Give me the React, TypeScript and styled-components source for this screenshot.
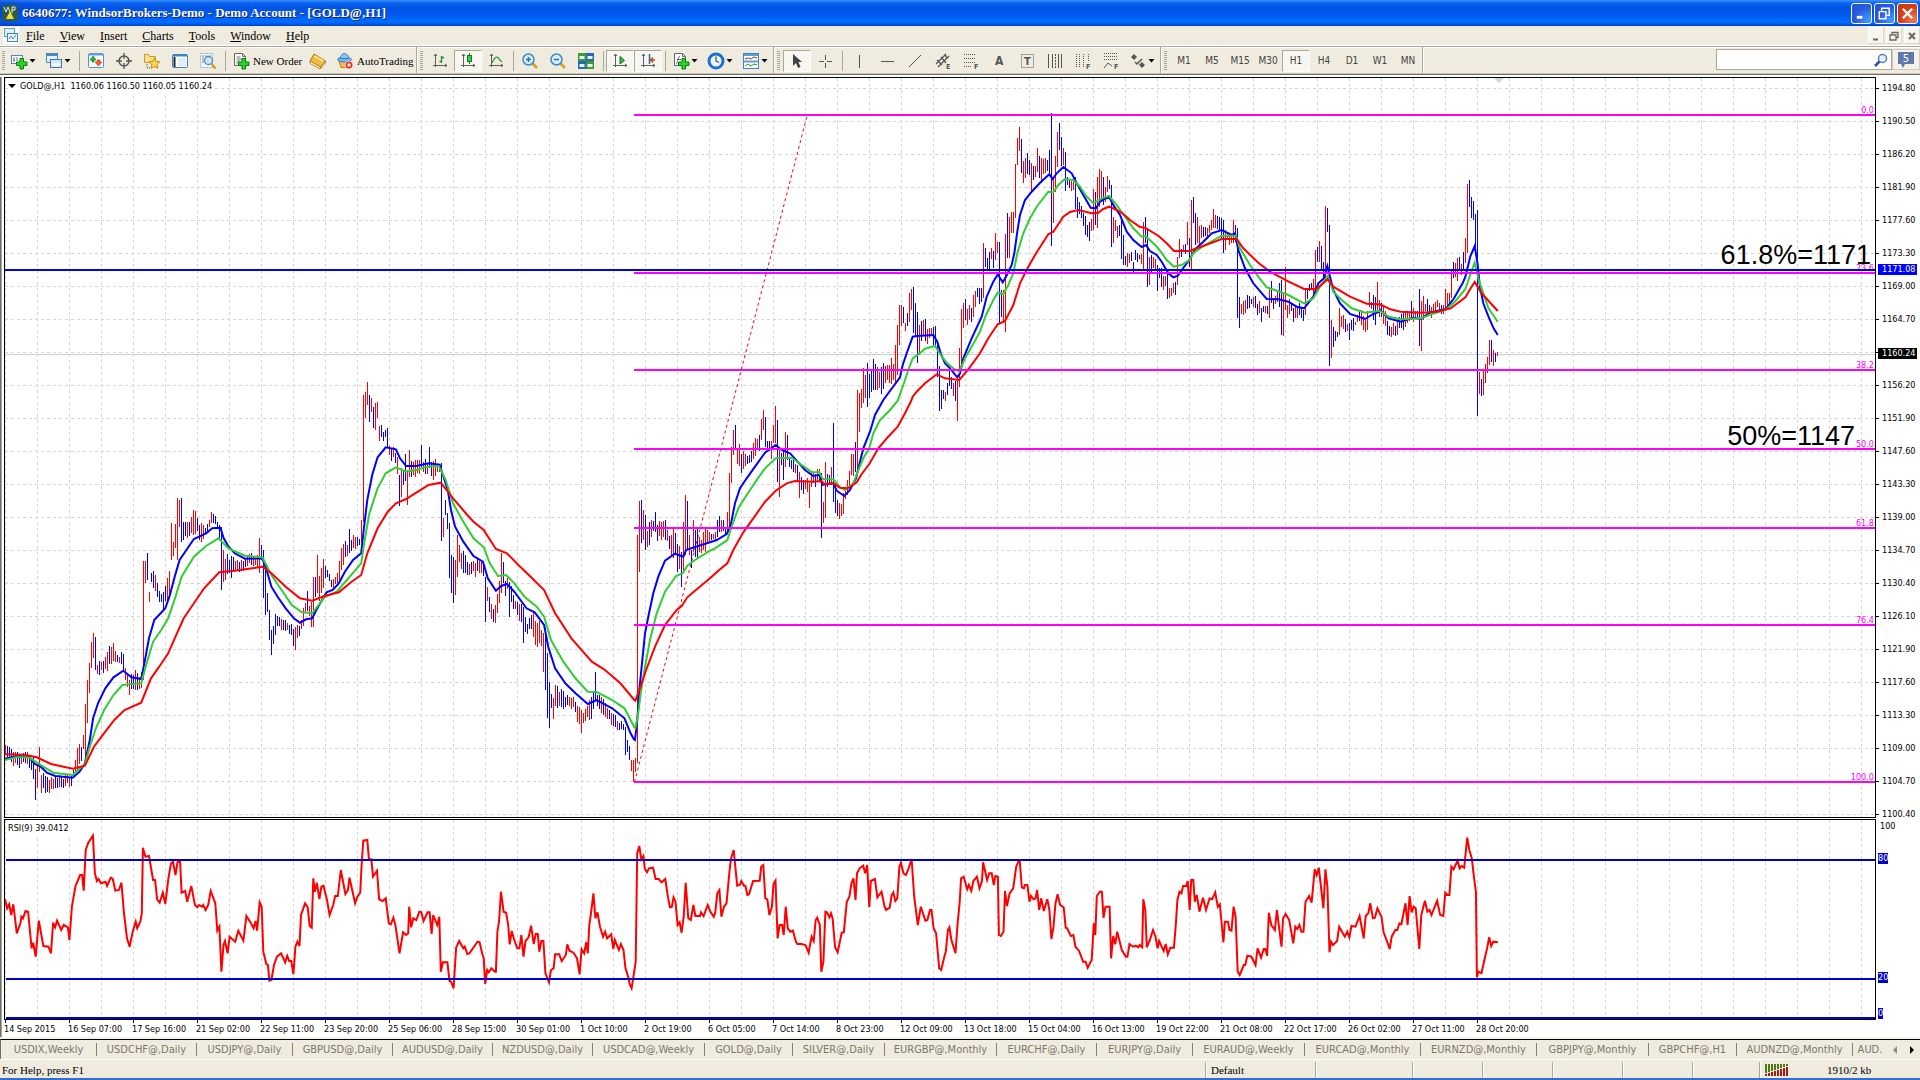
import React from "react";
import styled, { createGlobalStyle, css } from "styled-components";

const BEIGE = "#efebde";
const TAHOMA = '"DejaVu Sans Condensed", "Noto Sans", sans-serif';
const SERIF = '"Liberation Serif", serif';

const GlobalStyle = createGlobalStyle`
  * { box-sizing: border-box; }
  body { margin: 0; background: ${BEIGE}; }
  button, input { font: inherit; color: inherit; margin: 0; padding: 0; border: 0; background: none; }
  button { cursor: default; }
  button svg { overflow: visible; }
`;

/* ---------- series data ---------- */

type Block = { ox: number; oy: number; kx: number; ky: number; d: string };

const A = { ox: 0, oy: 360, kx: 2.45, ky: 3 };
const B = { ox: 600, oy: 400, kx: 3, ky: 3 };
const C = { ox: 900, oy: 90, kx: 3, ky: 3 };
const D = { ox: 1380, oy: 90, kx: 2.904, ky: 3 };

const fast: Block[] = [
  { ...A, d: "12,1196 40,1189 70,1190 85,1212 100,1220 115,1238 135,1248 178,1253 195,1235 208,1210 220,1140 228,1075 240,1030 258,985 278,952 302,932 312,942 322,952 346,957 352,920 365,835 378,780 405,745 415,710 428,650 440,600 455,573 475,537 505,520 520,505 540,503 548,535 560,560 575,580 600,596 643,595 652,625 665,680 680,710 700,745 720,775 735,788 750,778 765,775 775,750 800,697 815,690 830,670 845,635 865,600 885,580 890,520 900,420 912,345 925,292 945,262 970,268 980,295 995,318 1020,318 1050,310 1077,314 1085,345 1097,390 1105,450 1115,500 1135,545 1160,588 1183,605 1195,655 1215,692 1228,678 1242,672 1260,695 1290,745 1310,757 1333,795 1343,860 1360,925 1385,970 1410,1000 1440,1032 1462,1020 1500,1045 1530,1075 1545,1120 1553,1138" },
  { ...B, d: "105,1020 112,960 118,870 126,790 135,700 147,640 160,580 175,530 195,482 225,461 250,470 258,450 285,441 330,427 350,420 380,402 392,375 405,310 420,265 440,235 465,200 495,158 527,135 545,150 570,160 590,182 615,210 640,228 658,225 667,255 700,250 710,272 733,288 750,270 768,235 780,185 790,145 810,95 825,45 850,0" },
  { ...C, d: "0,862 8,825 20,790 38,740 50,738 100,735 112,755 122,790 135,820 150,835 172,862 180,850 190,805 215,745 245,680 260,620 280,575 293,553 308,577 318,560 335,525 343,490 352,425 360,375 375,330 395,305 420,278 448,253 458,267 470,250 490,231 515,250 530,280 550,315 572,353 588,355 600,335 627,320 640,345 660,375 680,425 700,450 725,471 738,465 750,483 770,495 785,515 805,550 820,562 833,558 845,540 868,510 885,478 910,455 935,430 965,420 995,435 1005,430 1015,480 1035,535 1060,580 1100,627 1135,628 1165,635 1190,650 1212,655 1240,620 1255,580 1272,565 1282,528 1290,560 1300,600 1320,640 1350,672 1395,687 1420,672 1436,666" },
  { ...D, d: "0,660 25,685 60,695 95,683 120,687 140,670 165,663 190,658 215,625 240,580 248,560 262,500 275,468 283,520 290,590 300,640 315,680 330,715 342,735" },
];

const middle: Block[] = [
  { ...A, d: "12,1200 40,1192 70,1192 100,1215 130,1238 178,1245 208,1212 220,1160 235,1105 255,1050 278,1005 300,975 346,970 358,915 375,845 395,810 412,775 430,710 445,650 475,590 505,558 535,535 560,565 600,587 643,592 665,645 690,690 715,735 740,757 765,760 795,712 825,695 850,660 885,610 892,550 905,460 925,385 945,340 970,322 995,335 1020,330 1045,320 1075,318 1092,360 1110,430 1130,475 1160,535 1185,562 1200,610 1220,648 1240,645 1260,670 1285,710 1315,740 1333,770 1350,840 1380,905 1410,955 1440,995 1462,996 1500,1020 1530,1045 1545,1080 1554,1102" },
  { ...B, d: "106,985 114,945 122,880 135,800 150,720 170,640 195,575 228,528 248,520 262,497 285,480 330,452 345,445 382,420 395,380 415,325 440,285 470,240 495,205 527,175 575,173 605,195 635,216 658,217 668,237 700,238 720,262 735,270 760,250 775,210 790,175 808,145 820,100 840,60 870,30 893,2" },
  { ...C, d: "10,885 25,840 38,805 60,790 75,776 105,768 122,795 140,818 160,835 178,845 195,805 215,770 240,725 258,675 280,630 293,608 310,612 325,585 340,550 352,490 370,430 390,385 410,350 445,305 460,307 475,285 495,267 520,270 540,290 560,320 580,340 605,325 627,318 650,345 675,380 700,415 725,440 735,438 755,455 775,475 800,510 822,530 845,525 868,510 880,490 915,465 965,437 1008,437 1020,475 1050,525 1075,560 1100,592 1140,605 1165,615 1212,640 1240,625 1260,590 1283,558 1300,605 1325,630 1355,655 1395,668 1436,663" },
  { ...D, d: "0,663 25,680 60,688 120,685 150,672 190,660 220,632 248,597 262,555 275,518 288,575 300,610 315,655 342,695" },
];

const slow: Block[] = [
  { ...A, d: "12,1183 60,1184 90,1192 125,1212 178,1226 208,1217 230,1160 258,1115 280,1080 305,1050 346,1028 370,955 390,920 412,880 430,830 450,775 475,730 500,685 537,637 575,632 600,628 643,620 665,640 700,680 735,715 765,722 795,708 830,697 860,667 885,645 900,580 925,505 950,455 970,430 995,417 1020,398 1050,375 1080,368 1110,415 1145,465 1160,485 1185,510 1215,567 1242,580 1270,615 1300,650 1333,690 1360,760 1400,835 1450,905 1480,928 1520,970 1554,1020" },
  { ...B, d: "106,902 120,865 140,805 165,740 195,675 230,630 245,618 262,592 285,572 330,535 355,512 382,490 400,450 430,397 460,355 495,305 527,272 560,250 585,243 640,245 665,243 672,252 700,250 720,263 745,265 770,247 785,222 808,192 835,145 865,110 893,80 915,40 933,4" },
  { ...C, d: "38,920 50,905 75,880 110,853 135,865 178,870 205,838 240,790 265,745 293,703 315,693 340,645 360,580 385,530 410,487 445,433 460,425 490,380 510,366 535,360 575,370 595,368 610,357 627,350 650,360 670,372 690,390 720,411 735,413 775,437 800,460 822,483 868,483 895,473 965,447 1010,447 1030,475 1075,518 1110,545 1160,572 1212,597 1250,597 1283,568 1300,590 1350,620 1400,641 1436,643" },
  { ...D, d: "0,643 30,658 60,665 120,668 165,665 205,655 248,622 262,597 275,576 295,610 342,663" },
];

/* High/low ranges of the hourly bars. A leading r or b pins one single bar and its colour. */
const ranges: Block[] = [
  { ...A, d: "12,1160,1190 30,1165,1215 50,1175,1220 65,1175,1205 80,1195,1250 b87,1227,1320 92,1215,1290 r97,1160,1235 105,1240,1290 120,1260,1300 135,1245,1285 155,1250,1280 175,1245,1275 185,1180,1240 200,1150,1200 r209,1032,1210 r214,960,1090 r219,910,1000 r224,845,925 r229,820,895 b234,830,930 240,900,935 245,905,940 260,885,930 273,850,915 290,885,915 300,875,920 308,925,975 315,955,1005 327,935,1000 345,940,985 r351,603,960 r357,603,670 b362,580,660 370,632,665 380,650,700 390,700,735 400,680,740 412,660,720 r420,490,600 428,500,560 r435,415,600 r440,420,500 b445,415,545 450,490,540 455,485,530 465,490,540 472,458,520 480,460,510 490,490,540 505,500,525 517,458,490 527,465,495 538,500,540 b543,500,690 r548,570,665 550,575,660 560,590,655 575,600,640 595,600,630 610,575,605 630,590,625 r636,535,640 b641,555,600 b646,570,715 b651,620,765 b656,700,755 b661,750,840 b666,810,885 670,790,865 676,755,800 690,775,805 710,790,820 720,800,860 r725,800,870 735,785,830 745,720,780 752,700,750 760,740,800 r768,650,800 b773,650,710 r778,585,700 790,605,680 800,625,650 812,655,690 825,640,670 832,600,650 838,540,610 850,560,595 b857,507,580 868,525,570 880,540,560 r885,480,550 r890,105,485 r895,95,175 r900,66,135 b905,105,185 r910,115,155 b916,140,205 r921,130,210 r925,125,175 930,190,235 940,215,245 945,195,235 b950,205,260 955,260,305 965,265,295 975,285,345 b979,345,437 r984,325,410 b990,330,375 r998,330,435 r1003,270,350 1010,290,360 1025,300,345 b1033,255,320 1045,300,345 b1052,262,325 1062,300,355 1075,310,330 b1081,310,543 r1088,475,530 1098,480,525 b1101,490,655 b1106,585,700 b1111,590,728 r1116,600,705 r1121,525,650 1130,570,625 1145,600,655 1160,600,645 1172,595,640 1185,610,655 b1190,650,785 1200,715,775 1210,745,810 1220,680,750 r1228,580,700 b1233,605,670 1243,640,690 b1248,665,770 1258,710,745 1270,735,780 1280,730,790 b1283,740,848 1290,790,835 1300,760,805 1312,770,850 1325,800,865 r1331,820,935 b1336,805,990 b1341,880,1075 b1346,965,1105 1352,1005,1075 1362,980,1050 1375,995,1045 1390,1010,1045 1405,1005,1040 1420,1050,1110 r1425,1050,1120 1435,1045,1080 1448,1010,1070 b1459,935,1020 1465,990,1040 1480,1030,1065 1500,1055,1095 1515,1080,1115 1528,1090,1110 b1533,1100,1185 1540,1150,1200 1547,1200,1245" },
  { ...B, d: "r100,1080,1145 r106,1075,1115 r112,405,1090 r118,303,515 b124,300,428 r130,330,420 b136,345,450 142,380,435 150,375,440 158,360,400 b166,335,395 172,365,415 190,365,410 200,375,430 210,420,460 220,390,470 232,430,510 b244,455,560 r250,365,515 r256,285,465 b262,303,450 270,405,460 b274,450,505 280,370,450 292,400,470 305,410,450 316,385,445 330,395,425 345,395,420 356,340,405 364,350,400 375,375,410 r382,335,400 r388,220,380 r394,140,250 r400,90,165 b406,75,150 412,130,185 424,160,225 436,160,190 445,165,195 458,130,180 470,115,150 480,110,145 r484,58,120 r490,30,90 b496,50,140 506,110,160 514,120,170 r520,75,130 r526,18,130 b532,60,245 r538,150,290 545,160,200 b550,150,240 r556,95,200 b562,105,180 570,175,205 585,185,215 r598,215,293 605,230,280 616,235,265 622,240,285 r628,250,323 636,210,260 650,215,255 658,210,245 b664,220,413 r670,305,370 r676,185,353 685,220,265 694,205,250 b700,70,305 b706,250,340 714,315,360 722,305,350 730,280,335 736,250,300 745,215,260 755,150,230 762,140,205 b767,125,215 r772,-30,220 r778,-20,95 786,-80,20 797,-90,0 804,-100,10 812,-110,0" },
  { ox: 0, oy: 0, kx: 1, ky: 1, d: "874,358,392 880,368,392 886,362,385 892,362,382 895,350,382 r897,325,375 r899,305,345" },
  { ...C, d: "r4,645,708 b10,650,700 16,690,715 22,660,705 r28,610,695 r34,597,660 b40,590,728 b46,640,735 b52,665,818 r58,705,795 64,700,750 72,685,755 80,720,780 90,705,735 102,710,765 107,710,780 b112,765,860 b118,828,962 b124,900,958 130,915,940 138,890,930 144,860,910 149,835,885 155,865,915 163,880,945 r172,870,992 r178,775,890 r184,657,835 r190,640,715 b196,628,690 205,640,690 213,650,690 r220,615,680 230,590,625 240,600,640 245,600,650 r250,460,625 b256,475,530 265,475,535 275,470,515 280,470,530 r286,428,510 r292,455,490 b298,457,700 b304,600,680 r310,600,700 r316,433,725 b322,370,505 r328,380,505 r334,365,430 r341,365,430 r346,222,385 r352,145,225 r358,112,182 b364,148,250 r370,213,278 378,195,260 385,195,250 r394,218,305 400,220,275 407,225,255 r412,175,245 b418,197,265 r424,205,278 432,205,250 442,200,245 b448,180,250 b454,70,467 r460,262,398 r466,198,305 r472,125,230 b478,100,180 b484,140,228 r490,175,225 b496,187,302 502,265,285 510,270,305 520,265,300 b526,260,358 b532,320,385 538,335,370 545,360,400 555,375,425 562,395,445 570,395,445 575,380,430 r580,298,420 b586,305,405 r592,260,415 r598,238,350 r604,243,330 b610,262,345 616,290,330 r622,257,305 b628,270,297 b634,285,470 r640,380,460 648,400,440 655,390,440 660,400,450 b664,385,508 b670,435,525 676,495,540 685,490,525 694,480,515 b700,515,552 708,485,515 718,490,515 726,485,540 r731,397,540 b736,382,460 b742,415,590 r748,500,585 754,490,545 765,500,545 b772,525,602 780,535,580 790,555,595 797,545,590 b802,550,628 808,595,632 815,590,610 826,565,610 r832,500,585 r838,448,505 844,470,495 852,455,490 r862,397,465 b868,445,530 r874,330,540 b880,320,400 b886,370,465 r892,380,460 900,405,455 910,400,440 920,405,445 930,395,430 r940,358,415 948,375,415 958,370,415 b964,385,450 b970,390,490 r976,420,480 985,430,460 995,435,470 r1002,390,460 b1008,405,455 b1012,415,685 b1018,620,715 1024,640,680 1034,640,670 1042,615,655 1050,625,645 1060,620,650 1070,630,670 1078,630,670 b1084,655,695 1095,650,670 1103,650,680 r1108,590,685 b1114,572,640 1122,620,648 1132,600,640 b1138,578,650 b1144,570,735 r1150,605,738 r1156,530,660 1162,635,680 1172,630,655 1180,655,700 1190,650,685 1200,640,670 1210,660,700 r1216,595,675 1225,583,610 1235,580,600 r1240,568,620 r1246,480,600 b1252,470,515 r1258,452,515 b1264,468,540 b1270,515,570 r1276,348,570 b1282,355,425 b1288,405,827 r1294,690,805 b1300,712,770 1306,725,755 1313,715,745 r1318,655,735 1324,665,705 1335,695,735 b1348,700,750 1358,685,720 1365,690,710 1375,655,690 1385,665,700 1392,690,745 1400,655,720 r1408,607,650 1416,625,645 b1422,615,690 b1426,620,705 r1432,577,660" },
  { ...D, d: "5,640,690 11,650,705 22,705,735 33,710,738 45,695,745 55,685,715 68,665,712 80,665,700 b91,633,690 100,655,690 108,655,690 b114,598,768 r120,633,782 r126,618,690 132,635,665 b137,628,670 148,645,680 158,640,660 167,630,655 178,650,680 r190,598,660 197,600,640 203,610,640 r208,540,625 b213,517,565 r219,520,560 r225,505,572 b230,500,540 240,510,540 b243,487,540 r248,445,520 r254,282,490 b259,270,350 b265,322,385 b271,332,390 b277,372,470 b283,360,977 r289,845,912 b295,868,918 r300,838,915 r306,822,878 r312,800,850 r318,750,825 b324,750,815 r330,780,828 b336,790,815 r341,787,798" },
];

const rsi: Block[] = [
  { ox: 0, oy: 810, kx: 1.96, ky: 3, d: "10,268 14,295 18,283 22,315 26,283 33,370 40,340 42,320 45,325 50,303 55,305 62,415 65,398 70,440 76,332 85,408 95,410 100,430 104,338 108,352 112,332 120,360 125,345 133,352 136,390 141,290 148,228 157,195 161,195 164,242 168,120 173,98 182,77 186,190 190,213 193,207 198,220 207,215 210,228 217,203 221,207 226,242 233,240 238,218 243,310 249,385 254,410 260,365 266,335 269,355 275,335 278,310 280,113 285,140 292,138 300,210 304,210 308,268 313,278 319,248 324,282 330,205 335,162 339,155 344,195 348,155 353,155 356,248 363,243 367,275 375,228 382,285 387,292 390,285 396,290 398,285 403,300 408,285 413,243 422,280 426,362 430,350 434,485 438,405 441,393 446,430 450,380 461,395 467,362 477,392 483,318 492,340 497,355 501,333 504,362 509,277 513,290 516,425 522,462 525,465 528,512 532,510 537,465 543,440 551,430 559,457 563,437 567,453 571,453 575,493 579,410 583,395 587,408 590,315 598,280 603,292 607,348 611,353 614,205 617,245 621,218 626,267 630,230 634,227 641,270 646,315 653,285 657,258 662,258 668,180 677,252 682,240 685,203 696,280 700,262 706,248 709,160 712,92 720,90 723,147 728,148 731,200 739,182 743,268 750,273 756,265 762,340 766,343 771,323 775,345 783,430 790,367 796,375 800,370 802,290 806,352 810,325 816,330 822,305 826,307 830,333 838,307 842,307 846,372 849,315 857,345 861,320 864,485 868,457 877,457 881,513 884,515 889,535 894,413 900,393 908,415 911,410 916,432 920,430 930,408 936,395 940,397 945,430 948,445 951,522 955,480 958,487 963,475 970,485 972,485 975,365 978,335 982,245 987,305 992,308 996,345 999,403 1003,363 1008,390 1014,415 1018,415 1022,375 1026,440 1030,393 1036,382 1041,347 1046,402 1050,372 1054,372 1057,425 1061,393 1065,393 1069,490 1076,517 1080,480 1085,475 1088,433 1096,433 1101,453 1109,435 1112,403 1116,422 1124,428 1131,445 1136,493 1140,418 1145,430 1149,397 1152,430 1155,345 1159,303 1163,250 1167,325 1171,307 1176,350 1182,380 1186,365 1190,385 1198,373 1202,417 1205,390 1213,420 1217,402 1222,420 1226,475 1232,505 1234,522 1238,535 1242,495 1246,455 1249,130 1253,108 1257,148 1261,138 1264,177 1268,187 1272,175 1280,173 1285,207 1291,207 1297,217 1304,207 1309,260 1313,292 1317,290 1320,262 1324,275 1328,345 1332,337 1336,368 1340,320 1344,218 1349,325 1354,330 1359,285 1363,318 1372,318 1374,307 1379,318 1387,285 1393,307 1399,320 1402,307 1406,250 1410,240 1414,320 1419,290 1424,280 1430,180 1433,145 1438,120 1442,182 1445,227 1450,225 1453,213 1458,227 1461,227 1465,255 1468,253 1476,213 1489,212 1492,170 1496,165 1500,265 1504,268 1508,315 1513,290 1516,222 1520,212 1524,385 1528,345 1533,345 1536,375 1540,290 1544,355 1549,365 1554,362 1560,395 1563,402 1568,402" },
  { ox: 780, oy: 810, kx: 1.96, ky: 3, d: "42,402 50,405 56,428 62,380 66,393 70,330 73,323 78,345 81,485 85,455 89,305 92,307 97,322 100,310 103,325 108,412 113,427 118,390 121,368 125,367 131,275 136,260 140,220 144,205 148,270 151,190 156,175 163,167 167,190 171,165 175,292 178,213 186,207 191,262 199,245 205,290 208,300 215,293 219,255 222,247 226,273 230,265 234,170 237,158 242,190 247,195 252,175 258,147 263,260 270,345 276,290 285,332 289,330 294,300 297,300 301,355 306,370 312,475 316,480 322,440 325,425 329,360 332,352 336,390 344,430 348,340 352,280 355,205 360,200 367,238 370,225 375,243 379,213 386,200 391,235 396,213 398,157 406,210 410,190 415,190 419,225 422,198 427,200 429,375 433,378 438,365 441,243 445,288 450,250 457,235 463,170 467,155 470,155 474,232 478,235 480,225 485,225 489,275 492,258 497,268 501,265 504,240 508,300 512,265 517,303 524,268 528,300 532,387 536,350 540,280 544,253 549,285 556,292 560,353 563,355 570,378 575,375 579,410 586,422 594,455 599,455 603,473 611,450 615,340 618,375 621,258 627,245 631,245 634,323 638,290 646,290 649,445 653,378 657,403 661,365 670,420 678,440 681,440 685,402 692,410 698,407 702,412 705,405 710,412 712,268 716,300 719,412 725,390 731,360 736,380 740,415 743,393 752,423 756,402 760,433 765,413 772,413 776,340 779,270 783,245 787,250 790,228 796,228 799,213 803,300 806,210 810,210 813,275 817,255 822,305 829,263 835,300 842,265 847,268 853,247 858,290 862,283 866,345 869,397 872,335 878,335 881,360 885,362 889,290 893,320 897,485 901,495 909,465 912,465 916,437 924,440 932,465 936,415 943,443 948,417 951,417 955,437 958,308 963,345 970,360 974,300 983,410 986,325 991,312 998,330 1006,400 1010,350 1014,357 1018,345 1022,365 1026,365 1030,275 1037,258 1042,278 1048,178 1052,195 1056,173 1065,295 1069,178 1073,230 1077,427 1080,395 1084,405 1092,393 1096,350 1107,380 1112,365 1116,382 1120,348 1128,350 1136,318 1144,385 1148,318 1153,310 1157,280 1162,325 1166,323 1171,295 1179,320 1183,367 1190,395 1195,417 1199,380 1206,360 1210,360 1214,340 1218,343 1226,280 1230,345 1234,258 1238,307 1242,290 1246,295 1253,417 1257,315 1264,272 1269,305 1273,300 1277,315 1288,272 1294,315 1300,318 1304,248 1308,255 1312,255 1316,170 1320,178 1328,152 1332,175 1336,168 1341,173 1347,83 1351,120 1356,145 1360,200 1364,245 1366,502 1369,485 1375,490 1382,440 1386,415 1390,382 1394,408 1398,395 1407,397" },
];

const toPoints = (blocks: Block[]) =>
  blocks
    .flatMap((b) =>
      b.d.split(" ").map((p) => {
        const [x, y] = p.split(",").map(Number);
        return `${(b.ox + x / b.kx).toFixed(1)},${(b.oy + y / b.ky).toFixed(1)}`;
      })
    )
    .join(" ");

type Range = { x: number; hi: number; lo: number; tone?: string };

const buildBars = () => {
  const all: Range[] = ranges.flatMap((b) =>
    b.d.split(" ").map((p) => {
      const tone = /^[rb]/.test(p) ? p[0] : undefined;
      const [x, t, l] = (tone ? p.slice(1) : p).split(",").map(Number);
      return { x: b.ox + x / b.kx, hi: b.oy + t / b.ky, lo: b.oy + l / b.ky, tone };
    })
  );
  const pinned = new Map<number, Range>();
  all.filter((r) => r.tone).forEach((r) => pinned.set(Math.round((r.x - 5.4) / 2), r));
  const zones = all.filter((r) => !r.tone);
  let seed = 7;
  const rnd = () => ((seed = (seed * 16807) % 2147483647) / 2147483647);
  const out = { r: "", b: "" };
  for (let k = 0; k <= 746; k++) {
    const x = 5 + 2 * k;
    const pin = pinned.get(k);
    if (pin) {
      out[pin.tone as "r" | "b"] += `M${x + 0.5} ${Math.round(pin.hi)}V${Math.round(pin.lo)}`;
      continue;
    }
    let i = zones.findIndex((z) => z.x >= x);
    if (i < 1) i = i < 0 ? zones.length - 1 : 1;
    const p = zones[i - 1];
    const q = zones[i];
    const t = Math.min(1, Math.max(0, (x - p.x) / (q.x - p.x || 1)));
    const hi = p.hi + (q.hi - p.hi) * t;
    const lo = p.lo + (q.lo - p.lo) * t;
    const span = lo - hi;
    const top = Math.round(hi + (rnd() - 0.4) * span * 0.45);
    const bottom = Math.round(lo - (rnd() - 0.4) * span * 0.45);
    const rising = q.hi + q.lo < p.hi + p.lo;
    const tone = rnd() < (rising ? 0.68 : 0.38) ? "r" : "b";
    out[tone] += `M${x + 0.5} ${top}V${Math.max(bottom, top + 3)}`;
  }
  return out;
};

const bars = buildBars();
const fibs: [string, number][] = [["0.0", 115], ["23.6", 273], ["38.2", 370], ["50.0", 449], ["61.8", 528], ["76.4", 625], ["100.0", 782]];
const prices = ["1194.80", "1190.50", "1186.20", "1181.90", "1177.60", "1173.30", "1169.00", "1164.70", "", "1156.20", "1151.90", "1147.60", "1143.30", "1139.00", "1134.70", "1130.40", "1126.10", "1121.90", "1117.60", "1113.30", "1109.00", "1104.70", "1100.40"];
const dates = ["14 Sep 2015", "16 Sep 07:00", "17 Sep 16:00", "21 Sep 02:00", "22 Sep 11:00", "23 Sep 20:00", "25 Sep 06:00", "28 Sep 15:00", "30 Sep 01:00", "1 Oct 10:00", "2 Oct 19:00", "6 Oct 05:00", "7 Oct 14:00", "8 Oct 23:00", "12 Oct 09:00", "13 Oct 18:00", "15 Oct 04:00", "16 Oct 13:00", "19 Oct 22:00", "21 Oct 08:00", "22 Oct 17:00", "26 Oct 02:00", "27 Oct 11:00", "28 Oct 20:00"];
const tabs: [string, number][] = [["USDIX,Weekly", 96], ["USDCHF@,Daily", 100], ["USDJPY@,Daily", 96], ["GBPUSD@,Daily", 100], ["AUDUSD@,Daily", 100], ["NZDUSD@,Daily", 100], ["USDCAD@,Weekly", 112], ["GOLD@,Daily", 88], ["SILVER@,Daily", 92], ["EURGBP@,Monthly", 112], ["EURCHF@,Daily", 100], ["EURJPY@,Daily", 96], ["EURAUD@,Weekly", 112], ["EURCAD@,Monthly", 116], ["EURNZD@,Monthly", 116], ["GBPJPY@,Monthly", 112], ["GBPCHF@,H1", 88], ["AUDNZD@,Monthly", 116]];

/* ---------- layout ---------- */

const Shell = styled.div`
  display: flex;
  flex-direction: column;
  min-width: 0;
  min-height: 100vh;
  overflow: hidden;
  background: ${BEIGE};
  font-family: ${TAHOMA};
  color: #000;
`;

const TitleBar = styled.header`
  flex: none;
  height: 26px;
  display: flex;
  align-items: center;
  gap: 4px;
  padding: 0 2px 0 2px;
  background:
    linear-gradient(90deg, rgba(0, 40, 190, 0.35), rgba(0, 40, 190, 0) 70px),
    linear-gradient(#3a93ff, #0a62f0 3px, #0054e3 8px, #0058ee 14px, #006cff 21px, #0066fb 23px, #0040c8 26px);
`;

const Title = styled.h1`
  flex: 1;
  margin: 0;
  font: bold 13px/20px ${SERIF};
  color: #fff;
  text-shadow: 1px 1px #0a1f6b;
  white-space: nowrap;
`;

const WindowButtons = styled.div`
  display: flex;
  gap: 2px;
`;

const WindowButton = styled.button<{ $close?: boolean }>`
  width: 21px;
  height: 21px;
  border: 1px solid #fff;
  border-radius: 3px;
  display: grid;
  place-items: center;
  background: ${(p) => (p.$close ? "radial-gradient(circle at 80% 80%, #f07850, #d83a14 60%, #c8330f)" : "radial-gradient(circle at 85% 85%, #3f9bff, #2a5ce0 55%, #2450cc)")};
`;

const MenuBar = styled.nav`
  flex: none;
  height: 19px;
  display: flex;
  align-items: center;
  padding: 0 0 0 3px;
`;

const MenuItem = styled.button`
  padding: 0 8px 0 7px;
  font: 12px/18px ${SERIF};
  u { text-underline-offset: 1px; }
`;

const Spacer = styled.div`
  flex: 1;
`;

const ChildButton = styled.button`
  width: 16px;
  height: 17px;
  margin-left: 2px;
  display: grid;
  place-items: center;
  background: #f7f5ef;
  border: 1px solid #fff;
  border-right-color: #dbd6c6;
  border-bottom-color: #dbd6c6;
`;

const Toolbars = styled.div`
  flex: none;
  height: 32px;
  display: flex;
  padding: 1px 0 3px;
  border-top: 1px solid #fff;
  border-bottom: 2px solid #fff;
  box-shadow: inset 0 1px #aca899, inset 0 2px #fff, inset 0 -1px #716f64, inset 0 -2px #c9c5b5;
`;

const Group = styled.div`
  display: flex;
  align-items: center;
  height: 26px;
  padding-top: 2px;
  border-right: 1px solid #aca899;
  box-shadow: 1px 0 #fff;
`;

const Grip = styled.span<{ $w: number }>`
  width: ${(p) => p.$w}px;
  height: 20px;
  background: repeating-linear-gradient(#aca899 0 1px, transparent 1px 2px) center / 3px 20px no-repeat;
`;

const Sep = styled.span`
  width: 1px;
  height: 20px;
  margin: 0 2px 0 3px;
  background: #aca899;
`;

const pressed = css`
  background: #f8f6f0;
  border-color: #aca899 #fff #fff #aca899;
`;

const Tool = styled.button<{ $on?: boolean }>`
  width: 28px;
  height: 22px;
  border: 1px solid transparent;
  display: grid;
  place-items: center;
  font: 10px/16px ${TAHOMA};
  color: #444;
  ${(p) => p.$on && pressed}
`;

const WideTool = styled.button<{ $w: number }>`
  width: ${(p) => p.$w}px;
  height: 22px;
  display: flex;
  align-items: center;
  gap: 3px;
  padding-left: 4px;
  font: 11px/18px ${SERIF};
  white-space: nowrap;
`;

const DropTool = styled(WideTool)`
  gap: 1px;
`;

const Search = styled.label`
  width: 176px;
  height: 21px;
  margin-top: 2px;
  display: flex;
  align-items: center;
  padding: 0 3px;
  background: #fff;
  border: 1px solid #aca899;
  input { flex: 1; min-width: 0; outline: 0; font: 11px ${TAHOMA}; }
`;

const Chat = styled.button`
  width: 28px;
  height: 21px;
  margin-top: 2px;
  display: grid;
  place-items: center;
  background: #f4f2ea;
  border: 1px solid #cfcabb;
`;

const Workspace = styled.main`
  flex: 1;
  display: flex;
  flex-direction: column;
  padding: 0 1px 0 4px;
  background: linear-gradient(90deg, #716f64 0 1px, #aca899 1px 2px, #fff 2px);
  border-bottom: 2px solid #f5f2e8;
`;

const PaneRow = styled.section<{ $fixed?: number }>`
  flex: ${(p) => (p.$fixed ? `0 0 ${p.$fixed}px` : "1 0 auto")};
  display: flex;
  & + & { margin-top: 1px; }
`;

const Plot = styled.div`
  position: relative;
  flex: 1;
  min-width: 0;
  border: 1px solid #000;
  background: #fff;
`;

const Chart = styled.svg`
  position: absolute;
  inset: 0;
  width: 100%;
  height: 100%;
`;

const PlotTitle = styled.div`
  position: absolute;
  top: 0;
  left: 3px;
  display: flex;
  align-items: center;
  gap: 4px;
  padding-right: 3px;
  background: #fff;
  font: 9px/16px ${TAHOMA};
  white-space: pre;
`;

const Axis = styled.ol`
  position: relative;
  flex: none;
  width: 43px;
  margin: 0;
  padding: 1px 0 0;
  list-style: none;
`;

const Price = styled.li`
  height: 33px;
  display: flex;
  align-items: flex-start;
  gap: 3px;
  font: 9px/20px ${TAHOMA};
  &::before { content: ""; width: 3px; height: 1px; margin-top: 10px; background: #000; }
  &:nth-child(23) { height: 14px; }
`;

const Tag = styled.li<{ $y: number; $bg: string; $wide?: boolean }>`
  position: absolute;
  top: ${(p) => p.$y}px;
  left: 2px;
  width: ${(p) => (p.$wide ? "39px" : "auto")};
  padding: 0 0 0 ${(p) => (p.$wide ? 4 : 0)}px;
  font: 9px/11px ${TAHOMA};
  color: #fff;
  background: ${(p) => p.$bg};
`;

const AxisLimit = styled(Tag)`
  left: 4px;
  color: #000;
`;

const DateAxis = styled.ol`
  flex: none;
  height: 17px;
  display: flex;
  margin: 0;
  padding: 0;
  list-style: none;
`;

const DateLabel = styled.li`
  flex: none;
  width: 64px;
  font: 9px/13px ${TAHOMA};
  white-space: nowrap;
  &::before { content: ""; display: block; width: 1px; height: 3px; margin-left: 1px; background: #000; }
`;

const Tabs = styled.nav`
  flex: none;
  height: 20px;
  display: flex;
  align-items: center;
  border-top: 1px solid #000;
  border-left: 1px solid #716f64;
  overflow: hidden;
`;

const Tab = styled.a<{ $w: number }>`
  flex: none;
  width: ${(p) => p.$w}px;
  border-right: 1px solid #85816f;
  font: 11px/13px ${TAHOMA};
  color: #7b776a;
  text-align: center;
  text-decoration: none;
  white-space: nowrap;
`;

const LastTab = styled(Tab)`
  border: 0;
`;

const TabArrow = styled.button`
  width: 17px;
  height: 16px;
  display: grid;
  place-items: center;
`;

const StatusBar = styled.footer`
  flex: none;
  height: 21px;
  display: flex;
  align-items: stretch;
  padding-top: 2px;
  border-top: 1px solid #fff;
  border-bottom: 2px solid #2f6fd0;
  font: 11px/16px ${SERIF};
`;

const Cell = styled.div<{ $w?: number }>`
  flex: ${(p) => (p.$w ? `0 0 ${p.$w}px` : "1")};
  display: flex;
  align-items: center;
  gap: 38px;
  padding-left: ${(p) => (p.$w ? 5 : 2)}px;
  ${(p) => p.$w && "border-left: 1px solid #aca899; box-shadow: inset 1px 0 #fff;"}
`;

/* ---------- icons ---------- */

const Icon = ({ children, s = 18 }: { children: React.ReactNode; s?: number }) => (
  <svg width={s} height={s} viewBox="0 0 18 18" fill="none" aria-hidden="true">{children}</svg>
);
const Plus = ({ x = 6, y = 6 }) => (
  <path transform={`translate(${x} ${y})`} d="M4 .5h3.5V4H11v3.5H7.5V11H4V7.5H.5V4H4z" fill="#25d625" stroke="#0b7d14" />
);
const Caret = () => <svg width="7" height="4" viewBox="0 0 7 4" aria-hidden="true"><path d="M.5 0h6L3.5 3.5z" fill="#000" /></svg>;
const G = "#555";
const Axes = () => <path d="M4.5 2v13M2 13.5h14M3 4l1.500-2L6 4M14 12l2 1.500-2 1.500" stroke="#5f5f5f" />;

const NewChart = () => <Icon><rect x="1.500" y="3.500" width="11" height="8" fill="#f5fbff" stroke="#4b87b8" /><path d="M4 5v5M7 5v4M3 8h2" stroke="#777" /><Plus /></Icon>;
const Profiles = () => <Icon><rect x="1.500" y="1.500" width="11" height="9" fill="#e2effa" stroke="#4b87b8" /><path d="M2 3h10" stroke="#4b87b8" strokeWidth="2" /><rect x="5.500" y="7.500" width="11" height="8" fill="#d3e6f7" stroke="#3a78ad" /><path d="M7 12.500h8" stroke="#fff" strokeWidth="2" /></Icon>;
const Market = () => <Icon><rect x="1.500" y="1.500" width="15" height="14" rx="1" fill="#fff" stroke="#4a94d4" /><path d="M2 2.500h14" stroke="#58a2e0" strokeWidth="2" /><path d="M3 8l3-4 3 4H7v2H5V8z" fill="#22b52c" stroke="#127a1a" strokeWidth=".6" /><path d="M8 10h2V8h3v2h2l-3.500 4z" fill="#f4602c" stroke="#b13208" strokeWidth=".6" /></Icon>;
const DataWin = () => <Icon><circle cx="9" cy="9" r="5" stroke={G} strokeWidth="1.500" /><path d="M9 1v6M9 11v6M1 9h6M11 9h6" stroke={G} strokeWidth="1.300" /></Icon>;
const Navigator = () => <Icon><path d="M1.500 2.500h4l1 2h6v6h-11z" fill="#fbe08a" stroke="#c49a2c" /><path d="M4 12v4h4" stroke="#555" strokeDasharray="1 1" /><path d="M11.500 6l1.600 3.400 3.800.5-2.800 2.600.7 3.800-3.300-1.900-3.400 1.900.7-3.800L6 9.900l3.900-.5z" fill="#fcd54b" stroke="#c58b15" /></Icon>;
const Terminal = () => <Icon><rect x="1.500" y="2.500" width="15" height="13" rx="1" fill="#fff" stroke="#3b82c8" /><path d="M2 3.500h14" stroke="#3b82c8" strokeWidth="2" /><path d="M3.500 5v10" stroke="#222" strokeWidth="2" /><path d="M7 7h8M7 9h8M7 11h8M7 13h8" stroke="#c5d9ee" /></Icon>;
const Tester = () => <Icon><rect x="1.500" y="1.500" width="12" height="14" fill="#eef4f8" stroke="#9bb2c4" strokeDasharray="2 1" /><path d="M4 3v8M7 3v4M11 3v3" stroke="#7e93a5" /><circle cx="9.500" cy="8.500" r="4" fill="#cfe7fa" stroke="#4c8fc9" strokeWidth="1.300" /><path d="M12.500 12l4 4.500" stroke="#d59b28" strokeWidth="2.500" /></Icon>;
const Order = () => <Icon><path d="M2.500 1.500h8l3 3v9h-11z" fill="#fff" stroke="#666" /><path d="M10.500 1.500v3h3M4.500 5h4M4.500 7h7M4.500 9h4M4.500 11h3" stroke="#777" /><Plus /></Icon>;
const AddIndicator = () => <Icon><path d="M2.500 1.500h8l3 3v9h-11z" fill="#fff" stroke="#666" /><path d="M10.500 1.500v3h3M8 4.500c-3 0-2 8-4 7M5 7.500h4" stroke="#666" /><Plus /></Icon>;
const Book = () => <Icon><path d="M5 2l11.500 7-5 6L1 9z" fill="#f0bd3c" stroke="#a8751a" /><path d="M1 9v2.500l10 5.500.5-2zM11 17l5.500-6V9l-5 6z" fill="#fff3cc" stroke="#a8751a" strokeWidth=".8" /><path d="M5.500 4l9 5" stroke="#ffe596" strokeWidth="2" /></Icon>;
const Auto = () => <Icon><path d="M3 9l2 6.500h6L14 9z" fill="#f3c04a" stroke="#b98015" /><ellipse cx="8.500" cy="7.500" rx="7" ry="2.500" fill="#74b8ee" stroke="#2f7fc0" /><path d="M4.500 6.500c0-6.500 8-6.500 8 0z" fill="#8cc7f5" stroke="#2f7fc0" /><circle cx="13" cy="13" r="4" fill="#e22d1c" stroke="#fff" strokeWidth=".7" /><path d="M11.500 11.500h3v3h-3z" fill="#fff" /></Icon>;
const BarChart = () => <Icon><Axes /><path d="M10.500 4v7M10.500 5.500H13M8.500 9.500h2" stroke="#238a3b" strokeWidth="1.300" /></Icon>;
const Candles = () => <Icon><Axes /><path d="M10.500 1v11" stroke="#117a22" /><rect x="8.500" y="3.500" width="4" height="6" fill="#2fd24a" stroke="#117a22" /></Icon>;
const LineChart = () => <Icon><Axes /><path d="M5 11c2-5 5-8 7-4l3 3" stroke="#3c9a4c" strokeWidth="1.300" /></Icon>;
const Zoom = ({ plus }: { plus?: boolean }) => <Icon><path d="M11 11l5 5" stroke="#dca42d" strokeWidth="3" /><circle cx="7.500" cy="7.500" r="5.500" fill="#d9eefd" stroke="#3e8acb" strokeWidth="1.500" /><path d={plus ? "M5 7.500h5M7.500 5v5" : "M5 7.500h5"} stroke="#2670b5" strokeWidth="1.500" /></Icon>;
const Tile = () => <Icon><rect x="1" y="1" width="8" height="8" fill="#3f9a2f" /><rect x="9" y="1" width="8" height="8" fill="#2868b8" /><rect x="1" y="9" width="8" height="8" fill="#2868b8" /><rect x="9" y="9" width="8" height="8" fill="#3f9a2f" /><path d="M2.500 5.500h5M10.500 5.500h5M2.500 13.500h5M10.500 13.500h5" stroke="#e6f3ff" strokeWidth="3" /></Icon>;
const Shift = () => <Icon><Axes /><path d="M9 4.500l4.500 4L9 12z" fill="#2fc545" stroke="#127522" /></Icon>;
const AutoScroll = () => <Icon><Axes /><path d="M10.500 2v10" stroke="#1f6fa8" strokeWidth="1.500" /><path d="M16 8h-4M14 5.500L11.500 8l2.500 2.500" stroke="#c8431b" strokeWidth="1.500" /></Icon>;
const Clock = () => <Icon><circle cx="9" cy="9" r="7" fill="#eaf4fd" stroke="#1f6fd0" strokeWidth="3" /><path d="M9 4.500V9l3 1.500" stroke="#445" strokeWidth="1.200" /></Icon>;
const Template = () => <Icon><rect x="1.500" y="1.500" width="15" height="15" fill="#fff" stroke="#3c84c6" /><path d="M2 3h14M2 9.500h14" stroke="#5a9fd8" strokeWidth="2" /><path d="M3 7l3-1 3 1 3-2 3 1" stroke="#a33" /><path d="M3 14l3-2 3 2 3-2 3 1" stroke="#2c8b3a" /></Icon>;
const Pointer = () => <Icon><path d="M5 2v12l3-3 2 5 2.500-1L10.500 10H14z" fill="#444" /></Icon>;
const Cross = () => <Icon><path d="M9.500 3v5M9.500 11v5M3 9.500h5M11 9.500h5" stroke={G} /></Icon>;
const Draw = ({ d, dash }: { d: string; dash?: string }) => <Icon><path d={d} stroke={G} strokeDasharray={dash} /></Icon>;
const Letter = ({ x, y, size = 7, children }: { x: number; y: number; size?: number; children: string }) => (
  <text x={x} y={y} fontSize={size} fontWeight="bold" fontFamily={TAHOMA} fill={G}>{children}</text>
);
const Channel = () => <Icon><path d="M2 12L12 2M4 15L15 4M3 8l5 5M7 5l5 6M11 2l2 5" stroke={G} strokeWidth="1.300" /><Letter x={12} y={17}>E</Letter></Icon>;
const Fibo = () => <Icon><path d="M2 2.500h12M2 6.500h12M2 10.500h12M2 14.500h8" stroke={G} strokeDasharray="1 1" /><Letter x={12} y={17}>F</Letter></Icon>;
const TextA = () => <Icon><Letter x={5} y={13} size={12}>A</Letter></Icon>;
const TextT = () => <Icon><rect x="3.500" y="2.500" width="12" height="13" stroke={G} strokeDasharray="1 1" /><Letter x={6} y={13} size={11}>T</Letter></Icon>;
const Cycles = () => <Icon><path d="M2.500 2v14M6.500 2v14M12.500 2v14M15.500 2v14" stroke={G} /><path d="M9.500 2v14" stroke={G} strokeDasharray="2 1" /></Icon>;
const TimeZones = () => <Icon><path d="M2.500 2v13M5.500 2v13M9.500 2v13M14.500 2v8" stroke={G} strokeDasharray="1 1" /><Letter x={12} y={17}>F</Letter></Icon>;
const Fan = () => <Icon><path d="M2 1.500h14M2 4.500h14M2 7.500h14" stroke={G} strokeDasharray="1 1" /><path d="M2 16l4-5 4 3" stroke={G} /><Letter x={12} y={17}>F</Letter></Icon>;
const Arrows = () => <Icon><path d="M2 5l3-3 3 3-3 3zM10 13l3-3 3 3-3 3z" fill={G} /><path d="M6 10l2 2 5-5" stroke={G} strokeWidth="1.500" /></Icon>;

const gridPatterns = (id: string, y: number) => (
  <defs>
    <pattern id={`${id}v`} width="32" height="6" patternUnits="userSpaceOnUse"><rect width="1" height="3" fill="#d3d7d9" /></pattern>
    <pattern id={`${id}h`} width="6" height="33" patternUnits="userSpaceOnUse" y={y}><rect width="3" height="1" fill="#d3d7d9" /></pattern>
  </defs>
);

const Drop = ({ label, children }: { label: string; children: React.ReactNode }) => (
  <DropTool $w={35} aria-label={label}>{children}<Caret /></DropTool>
);

export default function App() {
  return (
    <Shell>
      <GlobalStyle />
      <TitleBar>
        <svg width="16" height="16" viewBox="0 0 16 16" aria-hidden="true">
          <rect width="16" height="16" fill="#2d5c49" />
          <path d="M2 2l2 5 2-5 2 5M10 8V2h3v3h-3" stroke="#e8ecd8" fill="none" />
          <path d="M8 6l4 8H4z" fill="#f5dc2e" />
        </svg>
        <Title>6640677: WindsorBrokers-Demo - Demo Account - [GOLD@,H1]</Title>
        <WindowButtons>
          <WindowButton aria-label="Minimize"><Icon s={17}><path d="M4 13h6" stroke="#fff" strokeWidth="3" /></Icon></WindowButton>
          <WindowButton aria-label="Restore"><Icon s={17}><path d="M6 6V3.500h8V11h-3" stroke="#fff" strokeWidth="1.500" /><path d="M3.500 7h7v7.500h-7z" stroke="#fff" strokeWidth="1.500" /></Icon></WindowButton>
          <WindowButton $close aria-label="Close"><Icon s={17}><path d="M4 4l10 10M14 4L4 14" stroke="#fff" strokeWidth="2.500" /></Icon></WindowButton>
        </WindowButtons>
      </TitleBar>

      <MenuBar>
        <svg width="16" height="17" viewBox="0 0 16 17" fill="none" aria-hidden="true">
          <rect width="16" height="17" fill="#fff" />
          <rect x="1.500" y="1.500" width="10" height="8" fill="#e3f0fc" stroke="#5b9bd8" />
          <rect x="4.500" y="6.500" width="10" height="8" fill="#f2f8ff" stroke="#3c83c8" />
          <path d="M6 12l2-3 2 3 3-4" stroke="#3c83c8" />
        </svg>
        {["File", "View", "Insert", "Charts", "Tools", "Window", "Help"].map((m) => (
          <MenuItem key={m}><u>{m[0]}</u>{m.slice(1)}</MenuItem>
        ))}
        <Spacer />
        <ChildButton aria-label="Minimize chart"><svg width="10" height="10"><path d="M2 8.500h5" stroke="#6b685c" strokeWidth="2" /></svg></ChildButton>
        <ChildButton aria-label="Restore chart"><svg width="10" height="10" fill="none"><path d="M3 3V1.500h6v5H7.500M1 4h6v5H1z" stroke="#6b685c" strokeWidth="1.300" /></svg></ChildButton>
        <ChildButton aria-label="Close chart"><svg width="10" height="10"><path d="M2 2l6 6M8 2L2 8" stroke="#6b685c" strokeWidth="2" /></svg></ChildButton>
      </MenuBar>

      <Toolbars>
        <Group>
          <Grip $w={6} />
          <Drop label="New chart"><NewChart /></Drop>
          <Drop label="Profiles"><Profiles /></Drop>
          <Sep />
          <Tool aria-label="Market Watch"><Market /></Tool>
          <Tool aria-label="Data Window"><DataWin /></Tool>
          <Tool aria-label="Navigator"><Navigator /></Tool>
          <Tool aria-label="Terminal"><Terminal /></Tool>
          <Tool aria-label="Strategy Tester"><Tester /></Tool>
          <Sep />
          <WideTool $w={76}><Order />New Order</WideTool>
          <Tool aria-label="MetaEditor"><Book /></Tool>
          <WideTool $w={84}><Auto />AutoTrading</WideTool>
        </Group>
        <Group>
          <Grip $w={9} />
          <Tool aria-label="Bar chart"><BarChart /></Tool>
          <Tool $on aria-label="Candlesticks"><Candles /></Tool>
          <Tool aria-label="Line chart"><LineChart /></Tool>
          <Sep />
          <Tool aria-label="Zoom in"><Zoom plus /></Tool>
          <Tool aria-label="Zoom out"><Zoom /></Tool>
          <Tool aria-label="Tile windows"><Tile /></Tool>
          <Sep />
          <Tool $on aria-label="Auto scroll"><Shift /></Tool>
          <Tool $on aria-label="Chart shift"><AutoScroll /></Tool>
          <Sep />
          <Drop label="Indicators"><AddIndicator /></Drop>
          <Drop label="Periods"><Clock /></Drop>
          <Drop label="Templates"><Template /></Drop>
        </Group>
        <Group>
          <Grip $w={9} />
          <Tool $on aria-label="Cursor"><Pointer /></Tool>
          <Tool aria-label="Crosshair"><Cross /></Tool>
          <Sep />
          <Tool aria-label="Vertical line"><Draw d="M9.500 3v13" /></Tool>
          <Tool aria-label="Horizontal line"><Draw d="M3 9.500h13" /></Tool>
          <Tool aria-label="Trendline"><Draw d="M3 15L15 3" /></Tool>
          <Tool aria-label="Equidistant channel"><Channel /></Tool>
          <Tool aria-label="Fibonacci retracement"><Fibo /></Tool>
          <Tool aria-label="Text"><TextA /></Tool>
          <Tool aria-label="Text label"><TextT /></Tool>
          <Tool aria-label="Cycle lines"><Cycles /></Tool>
          <Tool aria-label="Fibonacci time zones"><TimeZones /></Tool>
          <Tool aria-label="Fibonacci fan"><Fan /></Tool>
          <Drop label="Arrows"><Arrows /></Drop>
        </Group>
        <Group>
          <Grip $w={9} />
          {["M1", "M5", "M15", "M30", "H1", "H4", "D1", "W1", "MN"].map((t) => (
            <Tool key={t} $on={t === "H1"}>{t}</Tool>
          ))}
        </Group>
        <Spacer />
        <Search>
          <input type="text" aria-label="Search" />
          <svg width="14" height="14" viewBox="0 0 14 14" fill="none" aria-hidden="true"><circle cx="8.500" cy="5.500" r="4" fill="#eef5fd" stroke="#4a7fd0" strokeWidth="1.500" /><path d="M5.500 8.500L1 13" stroke="#2a4fa8" strokeWidth="2.500" /></svg>
        </Search>
        <Chat aria-label="5 messages">
          <svg width="18" height="18" viewBox="0 0 18 18" aria-hidden="true">
            <path d="M1 1h16v12H8l-2 4-2-4H1z" fill="#5f7aa9" />
            <text x="9" y="11" fontSize="11" fontFamily={TAHOMA} textAnchor="middle" fill="#fff">5</text>
          </svg>
        </Chat>
      </Toolbars>

      <Workspace>
        <PaneRow>
          <Plot>
            <Chart role="img" aria-label="GOLD hourly price chart">
              {gridPatterns("m", 10)}
              <rect width="100%" height="100%" fill="url(#mv)" />
              <rect width="100%" height="100%" fill="url(#mh)" />
              <g transform="translate(-5 -78)" fill="none">
                <path d="M1494 78h10l-5 5z" fill="#cfd4d6" />
                <rect x="5" y="354" width="100%" height="1" fill="#c9d0d2" />
                <path d="M634.500 782L807 116" stroke="#f00" strokeDasharray="3 3" />
                <path d={bars.r} stroke="#f00" shapeRendering="crispEdges" />
                <path d={bars.b} stroke="#00f" shapeRendering="crispEdges" />
                <polyline points={toPoints(fast)} stroke="#00f" strokeWidth="2" />
                <polyline points={toPoints(middle)} stroke="#32cd32" strokeWidth="2" />
                <polyline points={toPoints(slow)} stroke="#f00" strokeWidth="2" />
                {fibs.map(([n, y]) => <rect key={n} x="634" y={y - 1} width="100%" height="2" fill="#f0f" />)}
              </g>
              <g fill="#f0f" fontFamily={TAHOMA} fontSize="9" textAnchor="end">
                {fibs.map(([n, y]) => <text key={n} x="100%" dx="-1" y={y - 80}>{n}</text>)}
              </g>
              <rect y="191" width="100%" height="2" fill="#00f" />
              <g fontFamily='"Liberation Sans", Arial, sans-serif' fontSize="27" textAnchor="end">
                <text x="100%" dx="-4" y="186">61.8%=1171</text>
                <text x="100%" dx="-20" y="367">50%=1147</text>
              </g>
            </Chart>
            <PlotTitle>
              <svg width="8" height="4" aria-hidden="true"><path d="M0 0h8L4 4z" /></svg>
              <span>GOLD@,H1  1160.06 1160.50 1160.05 1160.24</span>
            </PlotTitle>
          </Plot>
          <Axis>
            {prices.map((p, i) => <Price key={i}>{p}</Price>)}
            <Tag $y={187} $bg="#00f" $wide>1171.08</Tag>
            <Tag $y={271} $bg="#000" $wide>1160.24</Tag>
          </Axis>
        </PaneRow>
        <PaneRow $fixed={201}>
          <Plot>
            <Chart role="img" aria-label="RSI chart">
              {gridPatterns("r", 0)}
              <rect width="100%" height="100%" fill="url(#rv)" />
              <g transform="translate(-5 -820)" fill="none">
                <polyline points={toPoints(rsi)} stroke="#f00" strokeWidth="2" />
                {[859, 978, 1017].map((y) => <rect key={y} x="6" y={y} width="100%" height="2" fill="#0000cd" />)}
              </g>
            </Chart>
            <PlotTitle>RSI(9) 39.0412</PlotTitle>
          </Plot>
          <Axis>
            <AxisLimit $y={2} $bg="#fff">100</AxisLimit>
            <Tag $y={34} $bg="#0000cd">80</Tag>
            <Tag $y={153} $bg="#0000cd">20</Tag>
            <Tag $y={189} $bg="#0000cd">0</Tag>
          </Axis>
        </PaneRow>
        <DateAxis>{dates.map((d) => <DateLabel key={d}>{d}</DateLabel>)}</DateAxis>
      </Workspace>

      <Tabs>
        {tabs.map(([t, w]) => <Tab key={t} href="#" $w={w}>{t}</Tab>)}
        <LastTab href="#" $w={34}>AUD.</LastTab>
        <TabArrow aria-label="Scroll left"><svg width="4" height="8"><path d="M4 0v8L0 4z" fill="#8d897b" /></svg></TabArrow>
        <TabArrow aria-label="Scroll right"><svg width="4" height="8"><path d="M0 0v8l4-4z" fill="#000" /></svg></TabArrow>
      </Tabs>

      <StatusBar>
        <Cell>For Help, press F1</Cell>
        <Cell $w={110}>Default</Cell>
        {[97, 70, 70, 70, 70, 67].map((w, i) => <Cell key={i} $w={w} />)}
        <Cell $w={161}>
          <svg width="24" height="12" aria-hidden="true">
            {[0, 1, 2, 3, 4, 5, 6, 7].map((i) => (
              <g key={i}>
                <rect x={i * 3} y="0" width="2" height={9 - i} fill="#4f7a10" />
                <rect x={i * 3} y={10 - i} width="2" height={2 + i} fill="#a01c10" />
              </g>
            ))}
          </svg>
          1910/2 kb
        </Cell>
      </StatusBar>
    </Shell>
  );
}
